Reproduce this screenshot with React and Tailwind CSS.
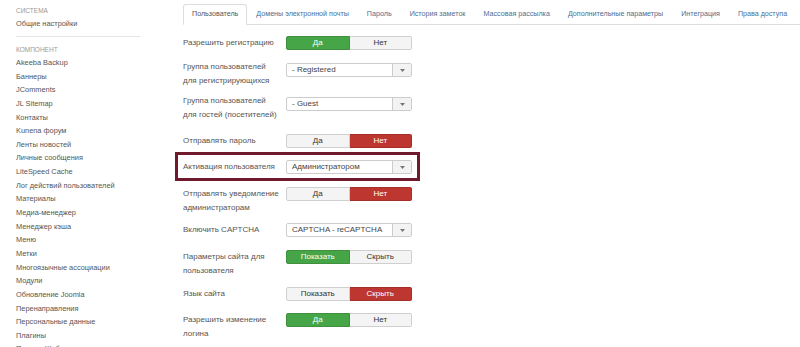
const SIDEBAR_ITEMS = [
  'Akeeba Backup',
  'Баннеры',
  'JComments',
  'JL Sitemap',
  'Контакты',
  'Kunena форум',
  'Ленты новостей',
  'Личные сообщения',
  'LiteSpeed Cache',
  'Лог действий пользователей',
  'Материалы',
  'Медиа-менеджер',
  'Менеджер кэша',
  'Меню',
  'Метки',
  'Многоязычные ассоциации',
  'Модули',
  'Обновление Joomla',
  'Перенаправления',
  'Персональные данные',
  'Плагины',
  'Поиск и Шаблоны',
];

const TABS = [
  'Пользователь',
  'Домены электронной почты',
  'Пароль',
  'История заметок',
  'Массовая рассылка',
  'Дополнительные параметры',
  'Интеграция',
  'Права доступа',
];

function Toggle({ left, right, active, tone }) {
  const on = tone === 'green' ? 'bg-[#46a546] text-white border-[#3f8f3f]' : 'bg-[#bd362f] text-white border-[#a5302a]';
  const off = 'bg-[#f4f4f4] text-[#333] border-[#cfcfcf]';
  return (
    <div className="flex h-[14px] w-[126px] shrink-0">
      <div
        className={`flex flex-1 items-center justify-center rounded-l-[2px] border ${
          active === 0 ? on : off
        }`}
      >
        {left}
      </div>
      <div
        className={`flex flex-1 items-center justify-center rounded-r-[2px] border border-l-0 ${
          active === 1 ? on : off
        }`}
      >
        {right}
      </div>
    </div>
  );
}

function Select({ value }) {
  return (
    <div className="flex h-[14px] w-[126px] shrink-0 rounded-[2px] border border-[#cccccc] bg-white">
      <div className="flex flex-1 items-center pl-[5px] text-[#444]">{value}</div>
      <div className="flex w-[19px] items-center justify-center border-l border-[#cccccc] bg-[#f3f3f3]">
        <svg width="5" height="3" viewBox="0 0 5 3">
          <path d="M0 0h5L2.5 3z" fill="#777" />
        </svg>
      </div>
    </div>
  );
}

function Row({ label, children, className = '' }) {
  return (
    <div className={`flex items-start ${className}`}>
      <div className="w-[103px] shrink-0 leading-[14px] text-[#555]">{label}</div>
      {children}
    </div>
  );
}

export default function App() {
  return (
    <div
      className="flex h-[347px] w-[800px] overflow-hidden bg-white text-[8px]"
      style={{ fontFamily: '"Liberation Sans", Arial, sans-serif' }}
    >
      {/* Sidebar */}
      <div className="w-[183px] shrink-0 pl-[16px] pt-[5px] text-[7.4px]">
        <div className="h-[12px] text-[6.5px] uppercase leading-[12px] text-[#999]">Система</div>
        <div className="h-[14px] leading-[14px] text-[#555]">Общие настройки</div>
        <div className="mb-[6px] mt-[5px] h-px w-[124px] bg-[#e5e5e5]" />
        <div className="h-[13px] text-[6.5px] uppercase leading-[13px] text-[#999]">Компонент</div>
        {SIDEBAR_ITEMS.map((item) => (
          <div key={item} className="h-[13.65px] whitespace-nowrap leading-[13.65px] text-[#555]">
            {item}
          </div>
        ))}
      </div>

      {/* Main */}
      <div className="flex-1 pt-[4px]">
        <div className="flex h-[21px] border-b border-[#dddddd] text-[7.15px]">
          {TABS.map((tab, i) => (
            <div
              key={tab}
              className={`-mb-px flex items-center whitespace-nowrap px-[8px] ${
                i === 0
                  ? 'rounded-t-[3px] border border-b-white border-[#dddddd] bg-white text-[#555]'
                  : 'border border-transparent text-[#4d6d92]'
              }`}
            >
              {tab}
            </div>
          ))}
        </div>

        <div className="flex flex-col">
          <Row label="Разрешить регистрацию" className="mt-[11px] items-center">
            <Toggle left="Да" right="Нет" active={0} tone="green" />
          </Row>
          <Row
            label={<>Группа пользователей<br />для регистрирующихся</>}
            className="mt-[10px]"
          >
            <div className="pt-[3px]">
              <Select value="- Registered" />
            </div>
          </Row>
          <Row
            label={<>Группа пользователей<br />для гостей (посетителей)</>}
            className="mt-[6px]"
          >
            <div className="pt-[3px]">
              <Select value="- Guest" />
            </div>
          </Row>
          <Row label="Отправлять пароль" className="mt-[12px] items-center">
            <Toggle left="Да" right="Нет" active={1} tone="red" />
          </Row>

          {/* highlighted setting */}
          <div className="-ml-[8px] mt-[4px] w-[245px] border-[3px] border-[#6e1a2c] px-[5px] pb-[4px] pt-[5px]">
            <Row label="Активация пользователя" className="items-center">
              <Select value="Администратором" />
            </Row>
          </div>

          <Row
            label={<>Отправлять уведомление<br />администраторам</>}
            className="mt-[6px]"
          >
            <Toggle left="Да" right="Нет" active={1} tone="red" />
          </Row>
          <Row label="Включить CAPTCHA" className="mt-[8px] items-center">
            <Select value="CAPTCHA - reCAPTCHA" />
          </Row>
          <Row
            label={<>Параметры сайта для<br />пользователя</>}
            className="mt-[13px]"
          >
            <Toggle left="Показать" right="Скрыть" active={0} tone="green" />
          </Row>
          <Row label="Язык сайта" className="mt-[9px] items-center">
            <Toggle left="Показать" right="Скрыть" active={1} tone="red" />
          </Row>
          <Row
            label={<>Разрешить изменение<br />логина</>}
            className="mt-[12px]"
          >
            <Toggle left="Да" right="Нет" active={0} tone="green" />
          </Row>
        </div>
      </div>
    </div>
  );
}
